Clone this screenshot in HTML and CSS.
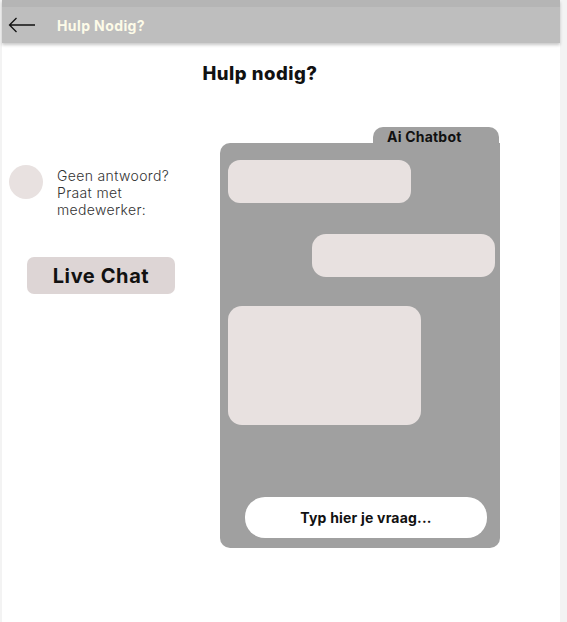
FILE: index.html
```html
<!DOCTYPE html>
<html lang="nl">
<head>
<meta charset="utf-8">
<title>Hulp Nodig?</title>
<link rel="stylesheet" href="styles.css">
</head>
<body>
<div class="app">
  <header class="topbar">
    <svg class="back" width="28" height="16" viewBox="0 0 28 16" aria-hidden="true">
      <path d="M27 8H1.5M8.5 1L1.5 8l7 7" fill="none" stroke="#111" stroke-width="1.3"/>
    </svg>
    <span class="topbar-title">Hulp Nodig?</span>
  </header>
  <main class="main">
    <h1 class="heading">Hulp nodig?</h1>
    <div class="content">
      <aside class="side">
        <div class="contact">
          <div class="avatar"></div>
          <p class="contact-text">Geen antwoord?<br>Praat met<br>medewerker:</p>
        </div>
        <button class="live-btn">Live Chat</button>
      </aside>
      <section class="chat">
        <div class="tab">Ai Chatbot</div>
        <div class="panel">
          <div class="bubble b1"></div>
          <div class="bubble b2"></div>
          <div class="bubble b3"></div>
          <div class="input">Typ hier je vraag...</div>
        </div>
      </section>
    </div>
  </main>
</div>
</body>
</html>
```
FILE: styles.css
```css
html, body {
  margin: 0;
  padding: 0;
}
body {
  background: #f3f3f3;
  font-family: "Inter", "Roboto", "Liberation Sans", sans-serif;
  color: #111;
}
.app {
  margin-left: 2px;
  width: 558px;
  height: 622px;
  background: #ffffff;
}
.topbar {
  display: flex;
  align-items: center;
  height: 36px;
  border-top: 7px solid #b5b5b5;
  background: #bebebe;
  box-shadow: 0 2px 3px rgba(0, 0, 0, 0.22);
  position: relative;
}
.back {
  margin-left: 6px;
  display: block;
}
.topbar-title {
  margin-left: 21px;
  font-size: 14px;
  font-weight: 700;
  color: #fdfbe8;
  letter-spacing: 0.4px;
}
.main {
  display: flex;
  flex-direction: column;
}
.heading {
  margin: 19px 0 0 0;
  width: 516px;
  text-align: center;
  font-size: 18.5px;
  line-height: 22px;
  font-weight: 800;
  letter-spacing: 0.5px;
  color: #111;
}
.content {
  display: flex;
  align-items: flex-start;
  margin-top: 43px;
  padding-left: 7px;
}
.side {
  width: 166px;
  padding-top: 38px;
  display: flex;
  flex-direction: column;
}
.contact {
  display: flex;
  align-items: flex-start;
}
.avatar {
  width: 34px;
  height: 34px;
  border-radius: 50%;
  background: #e8e1e0;
  flex: none;
}
.contact-text {
  margin: 2px 0 0 14px;
  font-size: 14px;
  line-height: 17px;
  font-weight: 300;
  letter-spacing: 0.35px;
  color: #333;
}
.live-btn {
  margin: 39px 0 0 18px;
  width: 148px;
  height: 37px;
  border: none;
  border-radius: 7px;
  background: #ddd5d5;
  font-family: inherit;
  font-size: 20px;
  font-weight: 700;
  letter-spacing: 0.6px;
  color: #111;
  padding: 0;
}
.chat {
  width: 280px;
  margin-left: 45px;
  display: flex;
  flex-direction: column;
}
.tab {
  position: relative;
  z-index: 1;
  align-self: flex-end;
  margin-right: 1px;
  width: 126px;
  height: 16px;
  padding: 1px 0 0 14px;
  box-sizing: border-box;
  line-height: 18px;
  background: #a0a0a0;
  border-radius: 10px 10px 0 0;
  font-size: 14px;
  font-weight: 700;
  letter-spacing: 0.2px;
  color: #111;
}
.panel {
  height: 405px;
  background: #a0a0a0;
  border-radius: 10px 0 10px 10px;
  display: flex;
  flex-direction: column;
  padding: 17px 5px 10px 8px;
  box-sizing: border-box;
}
.bubble {
  background: #e8e1e0;
  border-radius: 12px;
}
.b1 {
  width: 183px;
  height: 43px;
}
.b2 {
  align-self: flex-end;
  width: 183px;
  height: 43px;
  margin-top: 31px;
  border-radius: 14px;
}
.b3 {
  width: 193px;
  height: 119px;
  margin-top: 29px;
  border-radius: 14px;
}
.input {
  margin-top: auto;
  margin-left: 17px;
  width: 242px;
  height: 41px;
  border-radius: 20px;
  background: #ffffff;
  display: flex;
  align-items: center;
  justify-content: center;
  font-size: 14px;
  font-weight: 700;
  letter-spacing: 0.2px;
  color: #111;
}
```
